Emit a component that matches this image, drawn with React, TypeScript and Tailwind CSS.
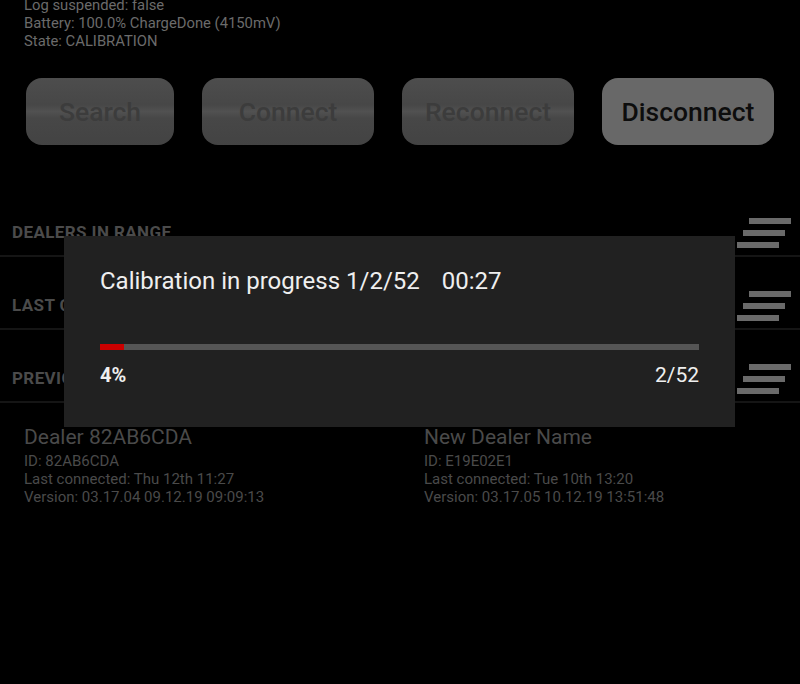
import React from 'react'

const disabledBg =
  'bg-[linear-gradient(to_bottom,#4d4d4d_0%,#474747_40%,#515151_50%,#474747_60%,#434343_100%)] text-[#3c3c3c]'

const buttons = [
  { label: 'Search', w: 'w-[148px]', on: false },
  { label: 'Connect', w: 'w-[172px]', on: false },
  { label: 'Reconnect', w: 'w-[172px]', on: false },
  { label: 'Disconnect', w: 'w-[172px]', on: true },
]

const sections = ['DEALERS IN RANGE', 'LAST CONNECTED', 'PREVIOUSLY CONNECTED']

const dealers = [
  { name: 'Dealer 82AB6CDA', id: '82AB6CDA', last: 'Thu 12th 11:27', version: '03.17.04 09.12.19 09:09:13' },
  { name: 'New Dealer Name', id: 'E19E02E1', last: 'Tue 10th 13:20', version: '03.17.05 10.12.19 13:51:48' },
]

const SortIcon = () => (
  <div className="flex flex-col items-end gap-[6px]">
    <div className="h-[6px] w-[42px] bg-[#6a6a6a]" />
    <div className="h-[6px] w-[42px] mr-[6px] bg-[#6a6a6a]" />
    <div className="h-[6px] w-[42px] mr-[12px] bg-[#6a6a6a]" />
  </div>
)

export default function App() {
  const step = 2
  const total = 52
  const pct = Math.round((step / total) * 100)

  return (
    <div className="relative w-[800px] h-[684px] overflow-hidden bg-black font-['Roboto',sans-serif]">
      {/* status lines */}
      <div className="-mt-[4px] pl-6 text-[14.8px] leading-[18px] text-[#6b6b6b]">
        <div>Log suspended: false</div>
        <div>Battery: 100.0% ChargeDone (4150mV)</div>
        <div>State: CALIBRATION</div>
      </div>

      {/* action buttons */}
      <div className="mt-[28px] flex gap-[28px] pl-[26px]">
        {buttons.map(b => (
          <div
            key={b.label}
            className={`${b.w} h-[67px] rounded-[16px] flex items-center justify-center text-[26.5px] font-medium ${b.on ? 'bg-[#686868] text-[#0d0d0d]' : disabledBg}`}
          >
            {b.label}
          </div>
        ))}
      </div>

      {/* sections */}
      <div className="mt-[39px]">
        {sections.map(s => (
          <div key={s} className="pt-[27px] border-b-2 border-[#151515]">
            <div className="h-[44px] flex items-center justify-between pl-3 pr-[9px]">
              <span className="text-[17px] tracking-[0.4px] font-bold text-[#4b4b4b]">{s}</span>
              <SortIcon />
            </div>
          </div>
        ))}
      </div>

      {/* previous dealers */}
      <div className="mt-[21px] grid grid-cols-2">
        {dealers.map(d => (
          <div key={d.id} className="pl-6 text-[#4a4a4a]">
            <div className="text-[21px] leading-[26px]">{d.name}</div>
            <div className="mt-[2px] text-[15px] leading-[18px]">
              <div>ID: {d.id}</div>
              <div>Last connected: {d.last}</div>
              <div>Version: {d.version}</div>
            </div>
          </div>
        ))}
      </div>

      {/* calibration dialog */}
      <div className="absolute left-[64px] top-[236px] w-[671px] h-[191px] bg-[#212121] px-[36px] pt-[30px]">
        <div className="flex text-[24px] leading-[30px] text-[#efefef]">
          <span>Calibration in progress 1/2/52</span>
          <span className="ml-[22px]">00:27</span>
        </div>
        <div className="mt-[48px] h-[6px] bg-[#555555]">
          <div className="h-full bg-[#cc0000]" style={{ width: `${pct}%` }} />
        </div>
        <div className="mt-[13px] flex justify-between text-[20px] leading-[24px] text-[#efefef]">
          <span className="font-bold">{pct}%</span>
          <span className="text-[21px]">
            {step}/{total}
          </span>
        </div>
      </div>
    </div>
  )
}
